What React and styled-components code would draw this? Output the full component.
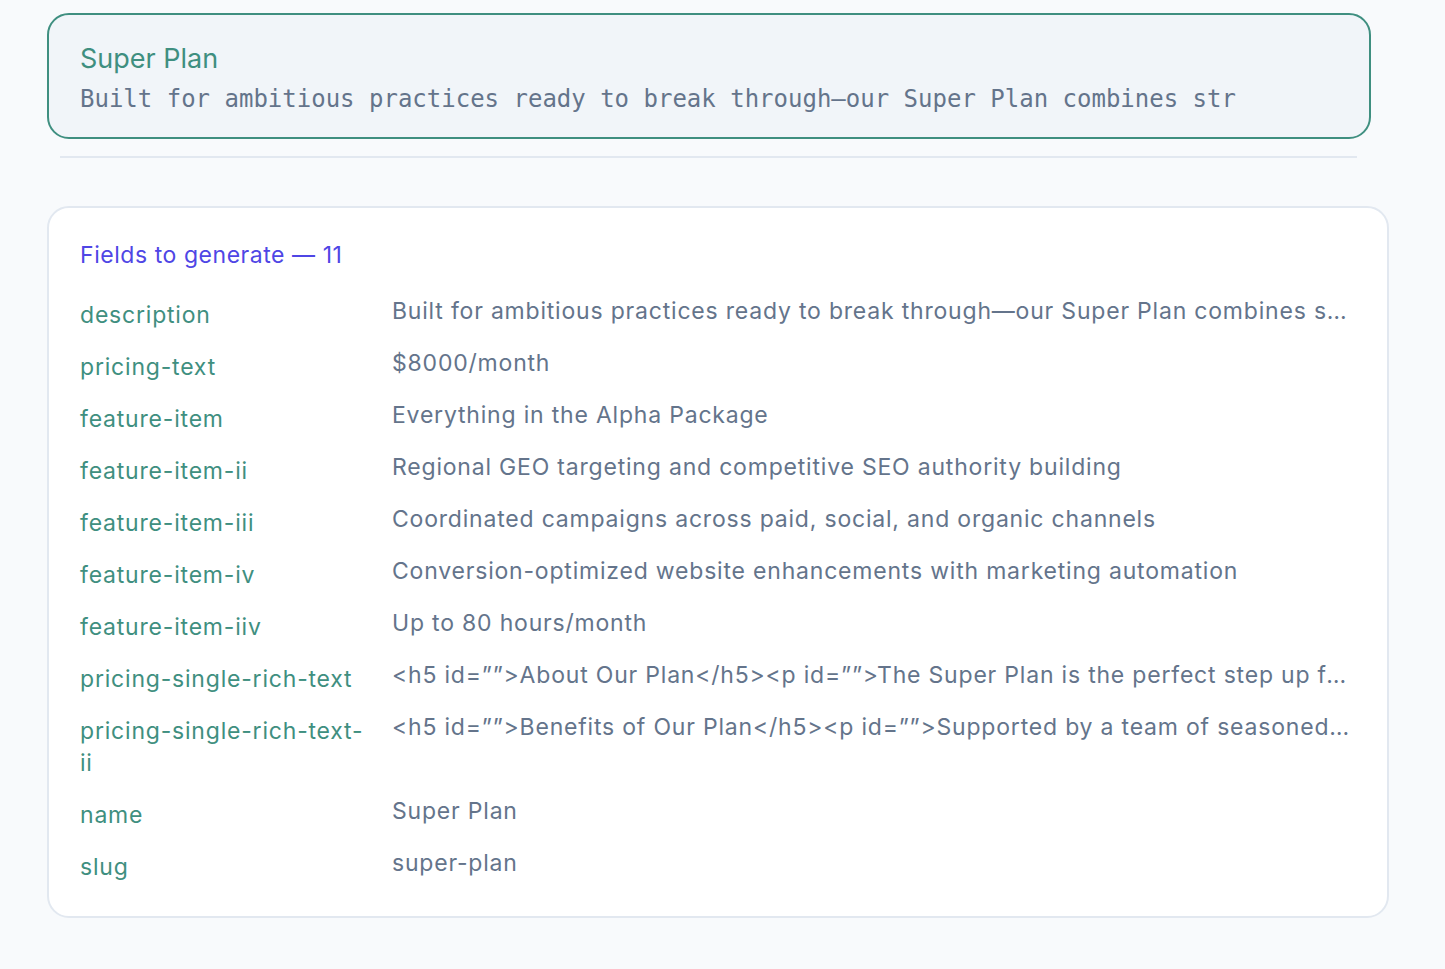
import React from 'react';
import styled, { createGlobalStyle } from 'styled-components';

const GlobalStyle = createGlobalStyle`
  html, body {
    margin: 0;
    padding: 0;
    background: #f8fafc;
  }
  body {
    font-family: Inter, "Liberation Sans", sans-serif;
  }
`;

const colors = {
  teal: '#3f8f80',
  slate: '#64748b',
  indigo: '#4f46e5',
  line: '#e2e8f0'
};

const Page = styled.div`
  padding: 13px 0 40px 47px;
  width: 1342px;
  min-height: 969px;
  box-sizing: border-box;
`;

const PlanCard = styled.section`
  width: 1324px;
  box-sizing: border-box;
  border: 2px solid ${colors.teal};
  border-radius: 22px;
  background: #f1f5f9;
  padding: 28px 31px 22px;
  display: flex;
  flex-direction: column;
  gap: 8px;
`;

const PlanTitle = styled.h2`
  margin: 0;
  font-size: 27px;
  line-height: 32px;
  font-weight: 400;
  color: ${colors.teal};
`;

const PlanSnippet = styled.p`
  margin: 0;
  font-family: "DejaVu Sans Mono", "Liberation Mono", monospace;
  font-size: 24px;
  line-height: 32px;
  color: ${colors.slate};
  white-space: nowrap;
  overflow: hidden;
`;

const Divider = styled.hr`
  margin: 17px 14px 0 13px;
  width: 1297px;
  border: 0;
  height: 2px;
  background: ${colors.line};
`;

const FieldsCard = styled.section`
  margin-top: 48px;
  width: 1342px;
  box-sizing: border-box;
  background: #ffffff;
  border: 2px solid ${colors.line};
  border-radius: 22px;
  padding: 31px 34px 33px 31px;
`;

const Heading = styled.h3`
  margin: 0 0 24px;
  font-size: 23px;
  letter-spacing: 0.55px;
  line-height: 32px;
  font-weight: 400;
  color: ${colors.indigo};
`;

const FieldList = styled.dl`
  margin: 0;
  display: grid;
  grid-template-columns: 290px 1fr;
  column-gap: 22px;
  row-gap: 16px;
  font-size: 23px;
  letter-spacing: 0.8px;
  line-height: 32px;
`;

const FieldName = styled.dt`
  margin: 0;
  padding-top: 4px;
  color: ${colors.teal};
`;

const FieldValue = styled.dd`
  margin: 0;
  min-width: 0;
  color: ${colors.slate};
  white-space: nowrap;
  overflow: hidden;
  text-overflow: ellipsis;
`;

const fields = [
  ['description', 'Built for ambitious practices ready to break through\u2014our Super Plan combines strategic growth with hands-on execution.'],
  ['pricing-text', '$8000/month'],
  ['feature-item', 'Everything in the Alpha Package'],
  ['feature-item-ii', 'Regional GEO targeting and competitive SEO authority building'],
  ['feature-item-iii', 'Coordinated campaigns across paid, social, and organic channels'],
  ['feature-item-iv', 'Conversion-optimized website enhancements with marketing automation'],
  ['feature-item-iiv', 'Up to 80 hours/month'],
  ['pricing-single-rich-text', '<h5 id=\u201d\u201d>About Our Plan</h5><p id=\u201d\u201d>The Super Plan is the perfect step up for growing practices.</p>'],
  ['pricing-single-rich-text-ii', '<h5 id=\u201d\u201d>Benefits of Our Plan</h5><p id=\u201d\u201d>Supported by a team of seasoned specialists.</p>'],
  ['name', 'Super Plan'],
  ['slug', 'super-plan']
];

const App = () => (
  <>
    <GlobalStyle />
    <Page>
      <PlanCard>
        <PlanTitle>Super Plan</PlanTitle>
        <PlanSnippet>
          Built for ambitious practices ready to break through—our Super Plan combines str
        </PlanSnippet>
      </PlanCard>
      <Divider />
      <FieldsCard>
        <Heading>Fields to generate — {fields.length}</Heading>
        <FieldList>
          {fields.map(([name, value]) => (
            <React.Fragment key={name}>
              <FieldName>{name}</FieldName>
              <FieldValue>{value}</FieldValue>
            </React.Fragment>
          ))}
        </FieldList>
      </FieldsCard>
    </Page>
  </>
);

export default App;
